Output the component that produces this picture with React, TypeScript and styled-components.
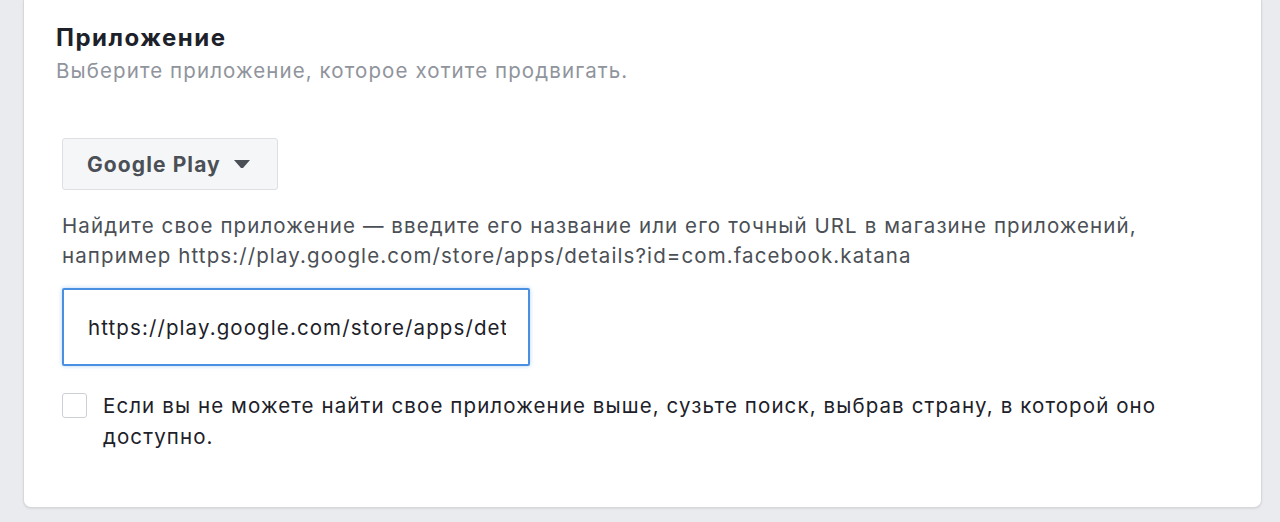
import React from "react";
import styled, { createGlobalStyle } from "styled-components";

const GlobalStyle = createGlobalStyle`
  html, body {
    margin: 0;
    padding: 0;
    background: #e9ebee;
  }
  body {
    font-family: Inter, "Noto Sans", "Liberation Sans", sans-serif;
    -webkit-font-smoothing: antialiased;
  }
`;

const Page = styled.div`
  height: 522px;
  box-sizing: border-box;
  padding: 0 18px 14px 23px;
  display: flex;
`;

const Card = styled.section`
  flex: 1;
  background: #fff;
  border: 1px solid #d6d8dc;
  border-top: none;
  border-radius: 0 0 8px 8px;
  box-shadow: 0 1px 2px rgba(0, 0, 0, 0.08);
  padding: 23px 0 0 32px;
`;

const Title = styled.h2`
  margin: 0;
  font-size: 24px;
  line-height: 30px;
  font-weight: 700;
  letter-spacing: 1.5px;
  color: #1d2129;
`;

const Subtitle = styled.p`
  margin: 5px 0 0;
  font-size: 20.5px;
  line-height: 26px;
  letter-spacing: 1.1px;
  color: #90949c;
`;

const Body = styled.div`
  padding: 54px 0 0 6px;
  display: flex;
  flex-direction: column;
  align-items: flex-start;
`;

const SelectButton = styled.button`
  display: flex;
  align-items: center;
  gap: 12px;
  height: 52px;
  padding: 0 26px 0 24px;
  background: #f5f6f7;
  border: 1px solid #dddfe2;
  border-radius: 3px;
  font-family: inherit;
  font-size: 21px;
  font-weight: 700;
  letter-spacing: 1.1px;
  color: #4b4f56;
`;

const Hint = styled.p`
  margin: 21px 0 0;
  font-size: 20.5px;
  line-height: 30px;
  letter-spacing: 1.1px;
  color: #4b4f56;
`;

const UrlInput = styled.input`
  margin-top: 17px;
  width: 468px;
  height: 78px;
  box-sizing: border-box;
  padding: 0 22px 0 24px;
  border: 2px solid #4a90e2;
  border-radius: 2px;
  box-shadow: 0 0 4px rgba(74, 144, 226, 0.4);
  font-family: inherit;
  font-size: 20.5px;
  letter-spacing: 1.1px;
  color: #1d2129;
  outline: none;
`;

const CheckRow = styled.label`
  margin-top: 24px;
  display: flex;
  align-items: flex-start;
  gap: 16px;
`;

const Box = styled.span`
  flex: none;
  width: 25px;
  height: 25px;
  margin-top: 3px;
  box-sizing: border-box;
  border: 1px solid #ccd0d5;
  border-radius: 3px;
  background: #fff;
`;

const CheckText = styled.span`
  max-width: 1070px;
  font-size: 20.5px;
  line-height: 31px;
  letter-spacing: 1.1px;
  color: #1d2129;
`;

export default function App() {
  return (
    <>
      <GlobalStyle />
      <Page>
        <Card>
          <Title>Приложение</Title>
          <Subtitle>Выберите приложение, которое хотите продвигать.</Subtitle>
          <Body>
            <SelectButton>
              Google Play
              <svg width="18" height="10" viewBox="0 0 18 10">
                <path d="M1 1h16l-7 8h-2z" fill="#4b4f56" />
              </svg>
            </SelectButton>
            <Hint>
              Найдите свое приложение — введите его название или его точный URL в магазине приложений,
              <br />
              например https://play.google.com/store/apps/details?id=com.facebook.katana
            </Hint>
            <UrlInput readOnly value="https://play.google.com/store/apps/details?id=com.facebook.katana" />
            <CheckRow>
              <Box />
              <CheckText>
                Если вы не можете найти свое приложение выше, сузьте поиск, выбрав страну, в которой оно
                доступно.
              </CheckText>
            </CheckRow>
          </Body>
        </Card>
      </Page>
    </>
  );
}
